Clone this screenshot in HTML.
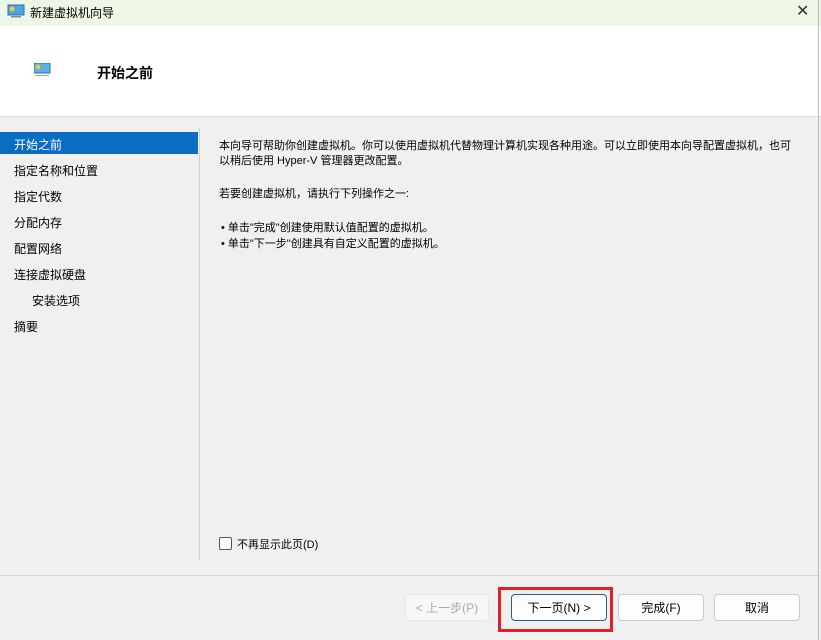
<!DOCTYPE html><html><head><meta charset="utf-8"><style>
body{margin:0;width:821px;height:640px;overflow:hidden;background:#f0f0f0;font-family:"Liberation Sans","Noto Sans CJK SC",sans-serif;font-size:12px;color:#000;position:relative}
.a{position:absolute}
.btn{position:absolute;top:594px;height:27px;border:1px solid #ccc;border-radius:4px;background:#fdfdfd;text-align:center;line-height:27px;box-sizing:border-box}
.nav{position:absolute;left:14px;font-size:12px}
</style></head><body>
<div class="a" style="left:0;top:0;width:821px;height:26px;background:#eef6e8"></div>
<svg class="a" style="left:7px;top:4px" width="18" height="14"><rect x="1" y="1" width="16" height="10" fill="#4fa3de" stroke="#2a6fb0"/><circle cx="5" cy="5" r="2.5" fill="#f5c542"/><rect x="4" y="12" width="10" height="1.5" fill="#888"/></svg>
<div class="a" style="left:30px;top:4px;font-size:12px">新建虚拟机向导</div>
<div class="a" style="left:796px;top:1px;font-size:16px;color:#333">✕</div>
<div class="a" style="left:0;top:26px;width:821px;height:90px;background:#fff;border-bottom:1px solid #ddd"></div>
<svg class="a" style="left:34px;top:63px" width="18" height="14"><rect x="0" y="0" width="16" height="10" fill="#5ab0e8" stroke="#2a6fb0"/><circle cx="4" cy="4" r="2.5" fill="#f5c542"/><rect x="1" y="12" width="14" height="1" fill="#aaa"/></svg>
<div class="a" style="left:97px;top:63px;font-size:14px;font-weight:bold">开始之前</div>
<div class="a" style="left:0;top:132px;width:198px;height:22px;background:#0a6cc2"></div>
<div class="nav" style="top:136px;color:#fff">开始之前</div>
<div class="nav" style="top:162px">指定名称和位置</div>
<div class="nav" style="top:188px">指定代数</div>
<div class="nav" style="top:214px">分配内存</div>
<div class="nav" style="top:240px">配置网络</div>
<div class="nav" style="top:266px">连接虚拟硬盘</div>
<div class="nav" style="top:292px;left:32px">安装选项</div>
<div class="nav" style="top:318px">摘要</div>
<div class="a" style="left:199px;top:128px;width:1px;height:432px;background:#d0d0d0"></div>
<div class="a" style="left:219px;top:139px;width:580px;font-size:11px;line-height:15px">本向导可帮助你创建虚拟机。你可以使用虚拟机代替物理计算机实现各种用途。可以立即使用本向导配置虚拟机，也可以稍后使用 Hyper-V 管理器更改配置。</div>
<div class="a" style="left:219px;top:185px;font-size:11px">若要创建虚拟机，请执行下列操作之一:</div>
<div class="a" style="left:221px;top:220px;font-size:11px;line-height:16px">• 单击"完成"创建使用默认值配置的虚拟机。<br>• 单击"下一步"创建具有自定义配置的虚拟机。</div>
<div class="a" style="left:219px;top:537px;width:11px;height:11px;border:1px solid #555;border-radius:2px;background:#fff"></div>
<div class="a" style="left:237px;top:536px;font-size:11px">不再显示此页(D)</div>
<div class="a" style="left:0;top:575px;width:819px;height:1px;background:#d8d8d8"></div>
<div class="a" style="left:818px;top:0;width:1px;height:640px;background:#bbb"></div>
<div class="btn" style="left:405px;width:84px;color:#aaa;border-color:#e5e5e5;background:#f7f7f7">&lt; 上一步(P)</div>
<div class="a" style="left:498px;top:587px;width:115px;height:45px;box-sizing:border-box;border:3px solid #e0202a"></div>
<div class="btn" style="left:511px;width:96px;border-color:#2a5f8a">下一页(N) &gt;</div>
<div class="btn" style="left:618px;width:86px">完成(F)</div>
<div class="btn" style="left:714px;width:86px">取消</div>
</body></html>
